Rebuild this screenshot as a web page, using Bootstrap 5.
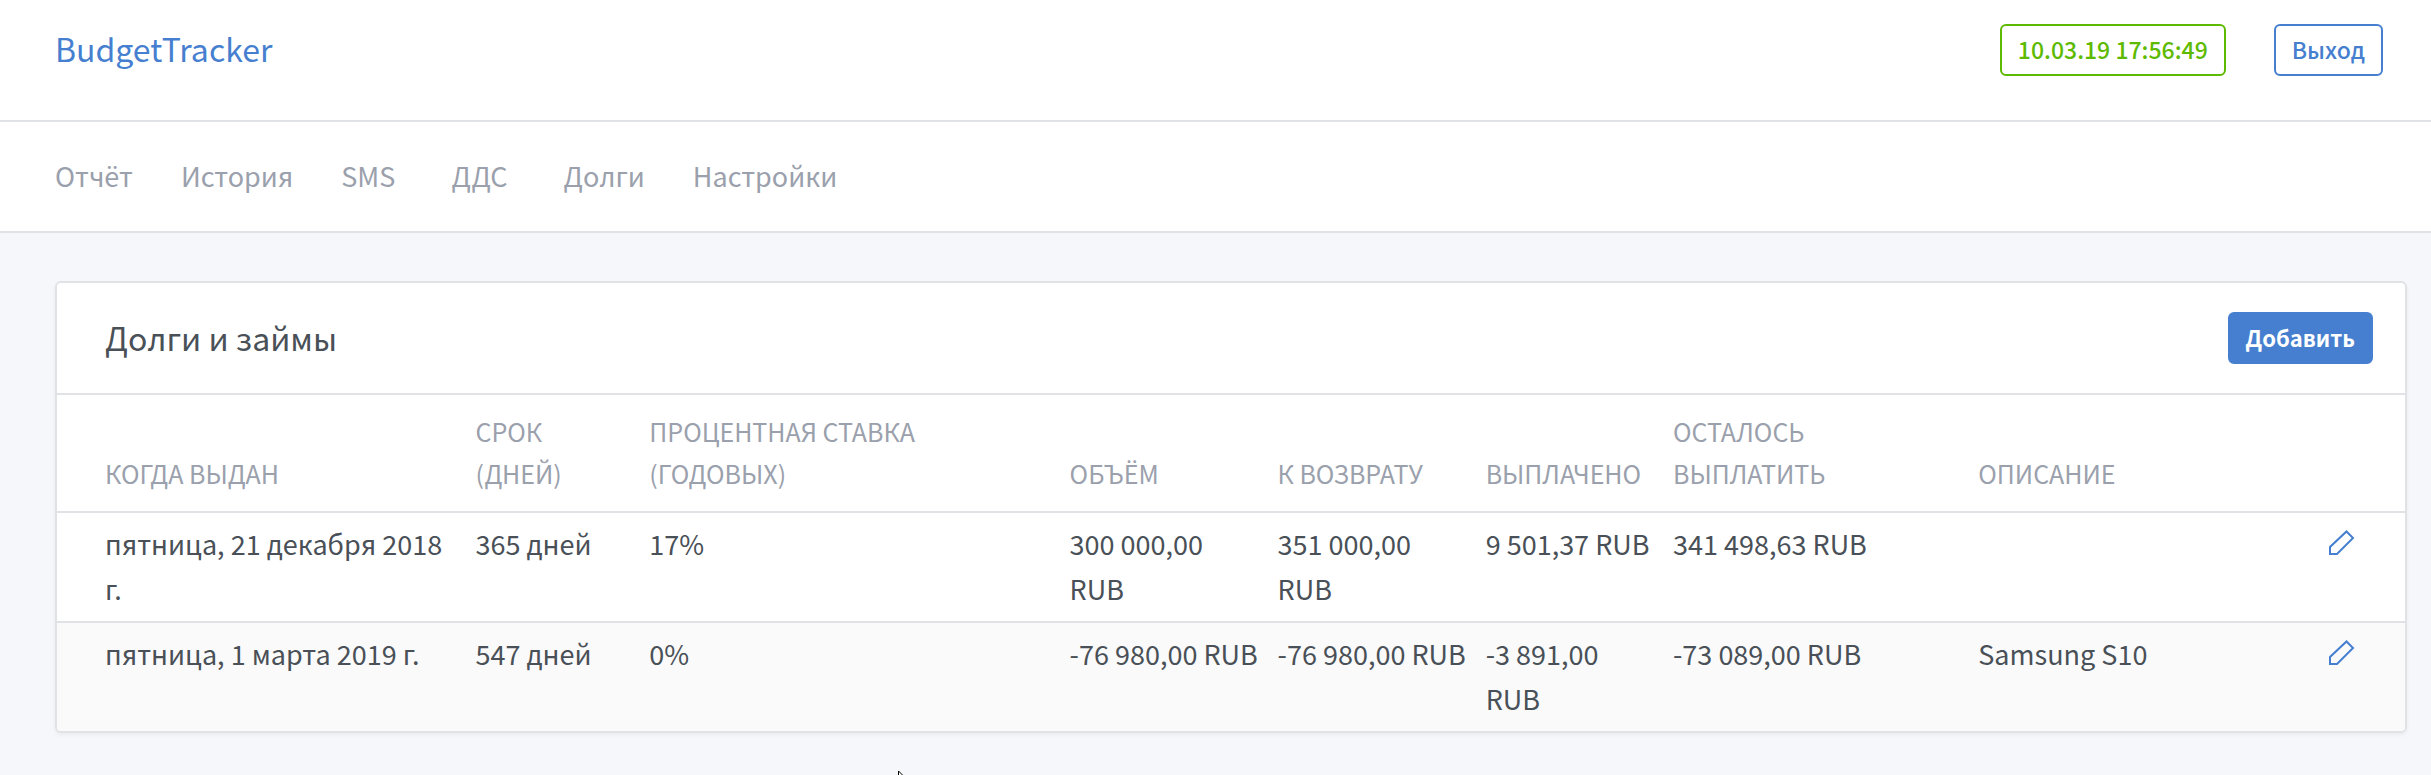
<!DOCTYPE html>
<html lang="ru">
<head>
<meta charset="utf-8">
<meta name="viewport" content="width=device-width, initial-scale=1">
<title>BudgetTracker</title>
<link rel="stylesheet" href="https://cdn.jsdelivr.net/npm/bootstrap@5.3.0/dist/css/bootstrap.min.css">
<style>
  :root { --line: #e0e2e6; --blue: #467fcf; --green: #5eba00; --muted-ink: #9aa0ac; --ink: #495057; }
  body { font-family: "Noto Sans CJK SC", "Noto Sans", sans-serif; font-size: 27px; line-height: 45px; color: var(--ink); background: #f5f7fb; }
  .topbar { padding: 24px 48px 44px 55px; border-bottom: 2px solid var(--line); }
  .brand-link { font-size: 32px; line-height: 48px; color: var(--blue); }
  .menubar { padding: 31px 55px 33px; border-bottom: 2px solid var(--line); }
  .menubar .nav { gap: 48px; }
  .menubar .nav-link { padding: 0; font-size: 27px; line-height: 45px; color: var(--muted-ink); }
  .btn { --bs-btn-border-width: 2px; --bs-btn-border-radius: 6px; --bs-btn-font-size: 23px; --bs-btn-line-height: 36px; padding: 5px 16px 7px; font-weight: 500; }
  .btn-outline-primary { --bs-btn-color: var(--blue); --bs-btn-border-color: var(--blue); }
  .btn-outline-success { --bs-btn-color: var(--green); --bs-btn-border-color: var(--green); }
  .btn-primary { --bs-btn-bg: var(--blue); --bs-btn-border-color: var(--blue); --bs-btn-font-size: 22px; font-weight: 700; }
  .page-body { padding: 48px 24px 42px 55px; }
  .card { --bs-card-border-width: 2px; --bs-card-border-color: var(--line); --bs-card-border-radius: 6px; --bs-card-inner-border-radius: 4px; box-shadow: 0 2px 4px rgba(0, 0, 0, .05); }
  .card-header { padding: 29px 32px 29px 48px; border-bottom: 2px solid var(--line); }
  .card-title { font-size: 32px; line-height: 50px; }
  .debts { table-layout: fixed; color: var(--ink); --bs-table-color: var(--ink); }
  .debts > :not(caption) > * > * { padding: 8px 8px 10px 10px; border-bottom-width: 0; background: none; box-shadow: none; color: inherit; }
  .debts > thead > tr > th { padding-top: 15px; padding-bottom: 17px; font-size: 25px; line-height: 42px; font-weight: 400; color: var(--muted-ink); text-transform: uppercase; vertical-align: bottom; }
  .debts > tbody > tr { border-top: 2px solid var(--line); }
  .debts > tbody > tr:nth-child(even) { background: #fafafa; }
  .debts > * > tr > :first-child { padding-left: 48px; }
  .col-date { width: 17.4%; } .col-term { width: 7.4%; } .col-rate { width: 17.9%; }
  .col-sum { width: 8.86%; } .col-paid { width: 7.98%; } .col-left { width: 13%; } .col-edit { width: 3.66%; }
  .pencil { width: 26px; height: 26px; display: block; margin-top: 9px; }
  .pointer { bottom: 0; left: 36.94%; width: 5px; height: 4px; }
</style>
</head>
<body>
<header class="topbar bg-white d-flex align-items-start justify-content-between">
  <a class="brand-link text-decoration-none" href="#">BudgetTracker</a>
  <div class="d-flex gap-5">
    <button type="button" class="btn btn-outline-success">10.03.19 17:56:49</button>
    <button type="button" class="btn btn-outline-primary">Выход</button>
  </div>
</header>
<div class="menubar bg-white">
  <nav class="nav" aria-label="Меню">
    <a class="nav-link" href="#">Отчёт</a>
    <a class="nav-link" href="#">История</a>
    <a class="nav-link" href="#">SMS</a>
    <a class="nav-link px-2" href="#">ДДС</a>
    <a class="nav-link" href="#">Долги</a>
    <a class="nav-link" href="#">Настройки</a>
  </nav>
</div>
<main class="page-body">
  <section class="card overflow-hidden">
    <div class="card-header bg-white d-flex align-items-start justify-content-between">
      <h1 class="card-title mb-0 fw-normal">Долги и займы</h1>
      <button type="button" class="btn btn-primary">Добавить</button>
    </div>
    <table class="table debts mb-0">
      <colgroup>
        <col class="col-date"><col class="col-term"><col class="col-rate"><col class="col-sum"><col class="col-sum"><col class="col-paid"><col class="col-left"><col><col class="col-edit">
      </colgroup>
      <thead>
        <tr><th>Когда выдан</th><th>Срок (дней)</th><th>Процентная ставка (годовых)</th><th>Объём</th><th>К возврату</th><th>Выплачено</th><th>Осталось<br>выплатить</th><th>Описание</th><th></th></tr>
      </thead>
      <tbody>
        <tr>
          <td>пятница, 21 декабря 2018 г.</td><td>365 дней</td><td>17%</td><td>300&nbsp;000,00 RUB</td><td>351&nbsp;000,00 RUB</td><td>9&nbsp;501,37 RUB</td><td>341&nbsp;498,63 RUB</td><td></td>
          <td><a href="#" aria-label="Изменить"><svg class="pencil" viewBox="0 0 26 26" fill="none" stroke="#467fcf" stroke-width="2"><path d="M1 24v-7L17.500 1.500l6.500 6.500L8 24z"/></svg></a></td>
        </tr>
        <tr>
          <td>пятница, 1 марта 2019 г.</td><td>547 дней</td><td>0%</td><td>-76&nbsp;980,00 RUB</td><td>-76&nbsp;980,00 RUB</td><td>-3&nbsp;891,00 RUB</td><td>-73&nbsp;089,00 RUB</td><td>Samsung S10</td>
          <td><a href="#" aria-label="Изменить"><svg class="pencil" viewBox="0 0 26 26" fill="none" stroke="#467fcf" stroke-width="2"><path d="M1 24v-7L17.500 1.500l6.500 6.500L8 24z"/></svg></a></td>
        </tr>
      </tbody>
    </table>
  </section>
</main>
<svg class="pointer position-fixed" viewBox="0 0 5 4" aria-hidden="true"><path d="M0 0l4 4H0z" fill="#fff"/><path d="M.5 0v4M.5 0l4 4" stroke="#000" fill="none"/></svg>
<script src="https://cdn.jsdelivr.net/npm/bootstrap@5.3.0/dist/js/bootstrap.bundle.min.js"></script>
</body>
</html>
